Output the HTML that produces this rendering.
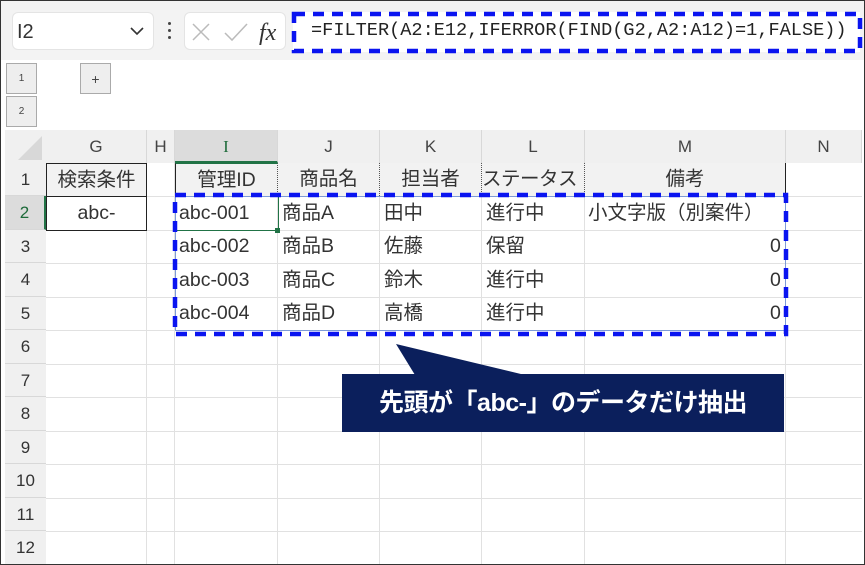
<!DOCTYPE html>
<html><head><meta charset="utf-8"><style>
*{margin:0;padding:0;box-sizing:border-box}
body{width:865px;height:565px;overflow:hidden;background:#fff;font-family:"Liberation Sans","Noto Sans CJK JP",sans-serif;position:relative}
.a{position:absolute}
.frame{left:0;top:0;width:865px;height:565px;border:1.5px solid #333;z-index:50;pointer-events:none}
.tb{left:0;top:0;width:865px;height:60px;background:#f3f3f3}
.box{background:#fff;border-radius:6px;border:1px solid #e4e4e4}
.vl{width:1px;background:#e1e1e1}
.hl{height:1px;background:#e1e1e1}
.ch{top:130px;height:33px;background:#f0f0f0;color:#444;font-size:17px;text-align:center;line-height:33px;border-right:1px solid #d8d8d8}
.rh{left:5px;width:41px;background:#f0f0f0;color:#333;font-size:17px;text-align:center;border-bottom:1px solid #d8d8d8}
.c{font-size:19.5px;color:#333;white-space:nowrap;line-height:33px;height:33px}
.hdr{background:#f2f2f2;text-align:center;border-right:1px dotted #555}
</style></head><body>
<div class="a tb"></div>
<div class="a box" style="left:12px;top:12px;width:142px;height:38px"></div>
<div class="a" style="left:17px;top:21px;font-size:20px;color:#333">I2</div>
<svg class="a" style="left:130px;top:26px" width="14" height="10"><path d="M1 2 L7 8 L13 2" fill="none" stroke="#333" stroke-width="1.6"/></svg>
<div class="a" style="left:168px;top:22px;width:3px;height:3px;background:#444;border-radius:2px"></div>
<div class="a" style="left:168px;top:29px;width:3px;height:3px;background:#444;border-radius:2px"></div>
<div class="a" style="left:168px;top:36px;width:3px;height:3px;background:#444;border-radius:2px"></div>
<div class="a box" style="left:184px;top:12px;width:102px;height:38px"></div>
<svg class="a" style="left:190px;top:20px" width="95" height="26"><path d="M3 4 L19 20 M19 4 L3 20" stroke="#bbb" stroke-width="1.5"/><path d="M35 13 L42 20 L57 4" fill="none" stroke="#bbb" stroke-width="1.5"/><text x="69" y="20" font-family="Liberation Serif" font-style="italic" font-size="24" fill="#333">fx</text></svg>
<div class="a" style="left:293px;top:12px;width:567px;height:40px;background:#fff"></div>
<svg class="a" style="left:290px;top:10px" width="575" height="46"><rect x="4" y="4" width="566" height="37" fill="none" stroke="#0a14f0" stroke-width="4.5" stroke-dasharray="11 8"/></svg>
<div class="a" style="left:311px;top:20px;font-family:'Liberation Mono',monospace;font-size:18.6px;color:#222">=FILTER(A2:E12,IFERROR(FIND(G2,A2:A12)=1,FALSE))</div>

<div class="a" style="left:6px;top:63px;width:31px;height:31px;background:#eee;border:1px solid #aaa;font-size:10px;text-align:center;line-height:30px;color:#444">1</div>
<div class="a" style="left:6px;top:96px;width:31px;height:31px;background:#eee;border:1px solid #aaa;font-size:10px;text-align:center;line-height:30px;color:#444">2</div>
<div class="a" style="left:80px;top:63px;width:31px;height:31px;background:#eee;border:1px solid #aaa;font-size:14px;text-align:center;line-height:30px;color:#444">+</div>

<div class="a" style="left:5px;top:130px;width:41px;height:33px;background:#f0f0f0"></div>
<svg class="a" style="left:14px;top:134px" width="30" height="28"><path d="M28 2 L28 26 L4 26 Z" fill="#d8d8d8"/></svg>
<div class="a ch" style="left:46px;width:101px">G</div>
<div class="a ch" style="left:147px;width:28px">H</div>
<div class="a ch" style="left:175px;width:103px;background:#dcdcdc;color:#1e6b3a;border-bottom:2px solid #217346;font-family:'Liberation Serif',serif">I</div>
<div class="a ch" style="left:278px;width:102px">J</div>
<div class="a ch" style="left:380px;width:102px">K</div>
<div class="a ch" style="left:482px;width:103px">L</div>
<div class="a ch" style="left:585px;width:201px">M</div>
<div class="a ch" style="left:786px;width:76px">N</div>

<div class="a rh" style="top:163px;height:33px;line-height:33px">1</div>
<div class="a rh" style="top:196px;height:34px;line-height:34px;color:#1e6b3a;background:#dcdcdc;border-right:2px solid #217346">2</div>
<div class="a rh" style="top:230px;height:33px;line-height:33px">3</div>
<div class="a rh" style="top:263px;height:34px;line-height:34px">4</div>
<div class="a rh" style="top:297px;height:33px;line-height:33px">5</div>
<div class="a rh" style="top:330px;height:34px;line-height:34px">6</div>
<div class="a rh" style="top:364px;height:33px;line-height:33px">7</div>
<div class="a rh" style="top:397px;height:34px;line-height:34px">8</div>
<div class="a rh" style="top:431px;height:33px;line-height:33px">9</div>
<div class="a rh" style="top:464px;height:34px;line-height:34px">10</div>
<div class="a rh" style="top:498px;height:33px;line-height:33px">11</div>
<div class="a rh" style="top:531px;height:34px;line-height:34px">12</div>

<div class="a hl" style="left:46px;top:196px;width:816px"></div>
<div class="a hl" style="left:46px;top:230px;width:816px"></div>
<div class="a hl" style="left:46px;top:263px;width:816px"></div>
<div class="a hl" style="left:46px;top:297px;width:816px"></div>
<div class="a hl" style="left:46px;top:330px;width:816px"></div>
<div class="a hl" style="left:46px;top:364px;width:816px"></div>
<div class="a hl" style="left:46px;top:397px;width:816px"></div>
<div class="a hl" style="left:46px;top:431px;width:816px"></div>
<div class="a hl" style="left:46px;top:464px;width:816px"></div>
<div class="a hl" style="left:46px;top:498px;width:816px"></div>
<div class="a hl" style="left:46px;top:531px;width:816px"></div>
<div class="a vl" style="left:146px;top:163px;height:402px"></div>
<div class="a vl" style="left:174px;top:163px;height:402px"></div>
<div class="a vl" style="left:277px;top:163px;height:402px"></div>
<div class="a vl" style="left:379px;top:163px;height:402px"></div>
<div class="a vl" style="left:481px;top:163px;height:402px"></div>
<div class="a vl" style="left:584px;top:163px;height:402px"></div>
<div class="a vl" style="left:785px;top:163px;height:402px"></div>

<div class="a c hdr" style="left:46px;top:163px;width:101px;border:1.5px solid #222;border-bottom:none">検索条件</div>
<div class="a c" style="left:46px;top:196px;width:101px;height:35px;text-align:center;border:1.5px solid #222;background:#fff">abc-</div>

<div class="a c hdr" style="left:175px;top:163px;width:103px;border-left:1.5px solid #222;border-top:1px solid #217346">管理ID</div>
<div class="a c hdr" style="left:278px;top:163px;width:102px">商品名</div>
<div class="a c hdr" style="left:380px;top:163px;width:102px">担当者</div>
<div class="a c hdr" style="left:482px;top:163px;width:103px;text-align:left;letter-spacing:-0.5px">ステータス</div>
<div class="a c hdr" style="left:585px;top:163px;width:201px;border-right:1.5px solid #222">備考</div>

<div class="a c" style="left:179px;top:197px">abc-001</div><div class="a c" style="left:282px;top:197px">商品A</div><div class="a c" style="left:384px;top:197px">田中</div><div class="a c" style="left:486px;top:197px">進行中</div><div class="a c" style="left:588px;top:197px">小文字版（別案件）</div>
<div class="a c" style="left:179px;top:230px">abc-002</div><div class="a c" style="left:282px;top:230px">商品B</div><div class="a c" style="left:384px;top:230px">佐藤</div><div class="a c" style="left:486px;top:230px">保留</div><div class="a c" style="left:770px;top:230px">0</div>
<div class="a c" style="left:179px;top:264px">abc-003</div><div class="a c" style="left:282px;top:264px">商品C</div><div class="a c" style="left:384px;top:264px">鈴木</div><div class="a c" style="left:486px;top:264px">進行中</div><div class="a c" style="left:770px;top:264px">0</div>
<div class="a c" style="left:179px;top:297px">abc-004</div><div class="a c" style="left:282px;top:297px">商品D</div><div class="a c" style="left:384px;top:297px">高橋</div><div class="a c" style="left:486px;top:297px">進行中</div><div class="a c" style="left:770px;top:297px">0</div>
<div class="a" style="left:175px;top:196px;width:104px;height:35px;border:1.5px solid #217346"></div>
<div class="a" style="left:275px;top:228px;width:5px;height:5px;background:#217346"></div>
<div class="a" style="left:175px;top:196px;width:611px;height:135px;border:1px solid #7d9ad8"></div>
<svg class="a" style="left:170px;top:190px" width="622" height="150"><rect x="5" y="5" width="611" height="139" fill="none" stroke="#0a14f0" stroke-width="4.5" stroke-dasharray="11 8"/></svg>

<svg class="a" style="left:0;top:0" width="865" height="565"><path d="M396 344 L415 375 L525 375 Z" fill="#0b1f5c"/></svg>
<div class="a" style="left:342px;top:374px;width:442px;height:58px;background:#0b1f5c;color:#fff;font-weight:bold;font-size:25px;line-height:58px;text-align:center;letter-spacing:-0.5px">先頭が「abc-」のデータだけ抽出</div>
<div class="a frame"></div>
</body></html>
